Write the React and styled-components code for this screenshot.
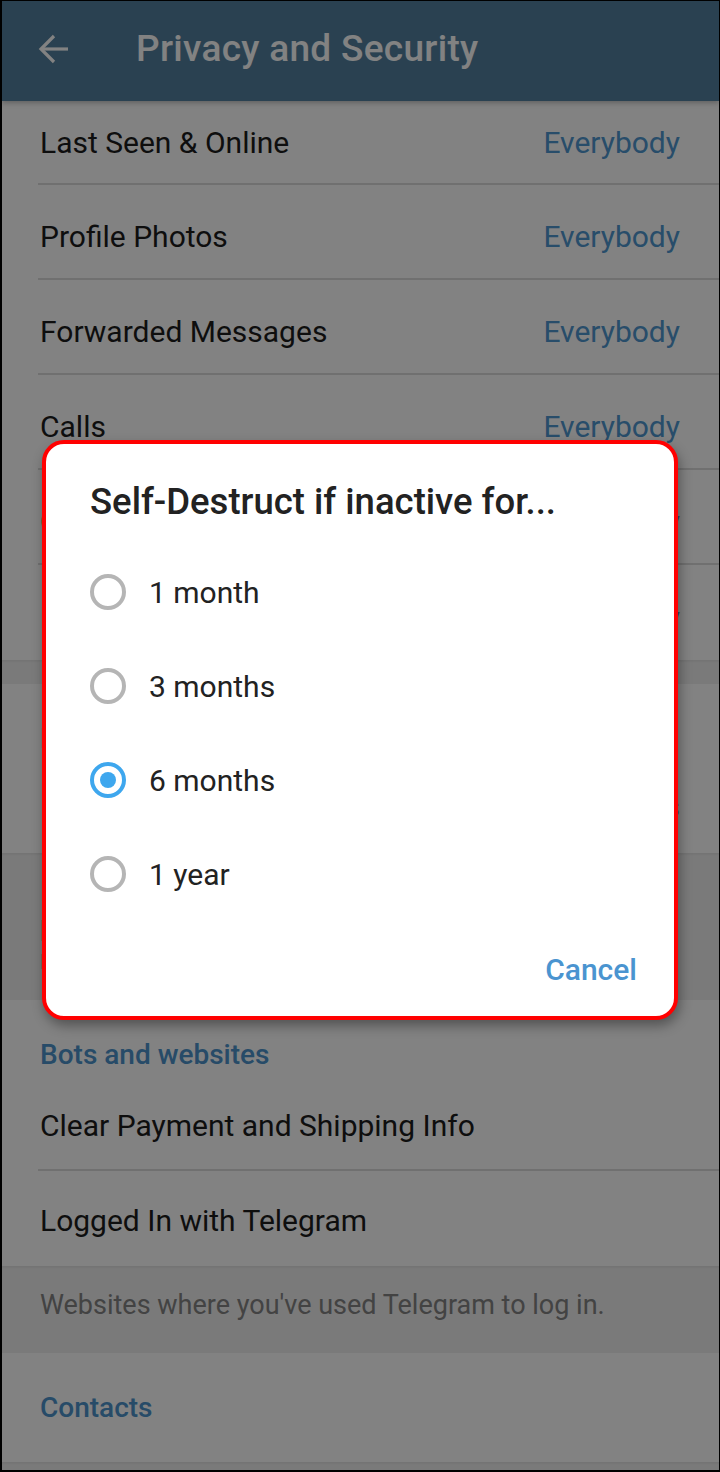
import React from 'react';
import styled, { createGlobalStyle } from 'styled-components';

const GlobalStyle = createGlobalStyle`
  html, body {
    margin: 0;
    padding: 0;
    background: #000;
  }
  body {
    font-family: Roboto, "Noto Sans", "Liberation Sans", sans-serif;
  }
`;

const Screen = styled.div`
  position: relative;
  width: 720px;
  height: 1472px;
  box-sizing: border-box;
  border-style: solid;
  border-color: #000;
  border-width: 1px 1px 2px 2px;
  background: #efeff3;
  overflow: hidden;
  display: flex;
  flex-direction: column;
`;

const Header = styled.header`
  height: 100px;
  flex-shrink: 0;
  background: #54809f;
  display: flex;
  align-items: center;
  padding-left: 36px;
  gap: 66px;
  box-shadow: 0 2px 5px rgba(0, 0, 0, 0.25);
  position: relative;
  z-index: 1;
`;

const BackIcon = styled.svg`
  width: 32px;
  height: 32px;
  margin-top: -4px;
`;

const Title = styled.h1`
  margin: 0;
  margin-top: -6px;
  font-size: 37px;
  font-weight: 500;
  color: #fff;
  letter-spacing: 0.3px;
`;

const Section = styled.section`
  background: #fff;
  display: flex;
  flex-direction: column;
`;

const SectionTitle = styled.div`
  height: ${(p) => p.$h}px;
  box-sizing: border-box;
  padding: 38px 38px 0;
  font-size: 28px;
  font-weight: 500;
  color: #4d94cc;
`;

const Row = styled.div`
  height: ${(p) => p.$h ?? 95}px;
  flex-shrink: 0;
  box-sizing: border-box;
  margin-left: 36px;
  padding: ${(p) => p.$top ?? 2}px 39px 0 2px;
  display: flex;
  align-items: center;
  justify-content: space-between;
  border-bottom: ${(p) => (p.$last ? 'none' : '2px solid #dcdcdc')};
  font-size: 30px;
  color: #1c1c1c;
`;

const Value = styled.span`
  color: #4f97d0;
`;

const Info = styled.div`
  height: ${(p) => p.$h}px;
  flex-shrink: 0;
  box-sizing: border-box;
  background: #f0f0f0;
  padding: ${(p) => p.$pad || '22px 38px 0'};
  font-size: 27px;
  line-height: 34px;
  color: #838383;
  box-shadow: inset 0 2px 2px rgba(0, 0, 0, 0.05);
  overflow: hidden;
`;

const Dim = styled.div`
  position: absolute;
  inset: 0;
  background: rgba(0, 0, 0, 0.49);
  display: flex;
  justify-content: center;
  align-items: flex-start;
  padding-top: 439px;
  z-index: 5;
`;

const Dialog = styled.div`
  width: 636px;
  box-sizing: border-box;
  margin-left: -1px;
  background: #fff;
  border: 4px solid #ff0000;
  border-radius: 22px;
  padding: 34px 0 19px;
  box-shadow: 2px 6px 12px rgba(0, 0, 0, 0.35);
  display: flex;
  flex-direction: column;
`;

const DialogTitle = styled.div`
  padding: 0 44px;
  font-size: 36.5px;
  font-weight: 500;
  color: #222;
  line-height: 48px;
  margin-bottom: 19px;
`;

const Option = styled.label`
  height: 94px;
  display: flex;
  align-items: center;
  gap: 23px;
  padding-left: 44px;
  font-size: 30px;
  color: #222;
`;

const Radio = styled.span`
  width: 36px;
  height: 36px;
  box-sizing: border-box;
  border-radius: 50%;
  border: 4px solid ${(p) => (p.$on ? '#3ea7ee' : '#b5b5b5')};
  display: flex;
  align-items: center;
  justify-content: center;
  &::after {
    content: '';
    width: 16px;
    height: 16px;
    border-radius: 50%;
    background: #3ea7ee;
    display: ${(p) => (p.$on ? 'block' : 'none')};
  }
`;

const Actions = styled.div`
  display: flex;
  justify-content: flex-end;
  padding: 0 37px;
  margin-top: 20px;
`;

const TextButton = styled.button`
  border: none;
  background: none;
  height: 56px;
  padding: 0;
  font-family: inherit;
  font-size: 30px;
  font-weight: 500;
  color: #4a94d0;
`;

const privacyRows = [
  ['Last Seen & Online', 'Everybody'],
  ['Profile Photos', 'Everybody'],
  ['Forwarded Messages', 'Everybody'],
  ['Calls', 'Everybody'],
  ['Groups & Channels', 'Everybody'],
  ['Phone Number', 'Everybody'],
];

const options = ['1 month', '3 months', '6 months', '1 year'];

export default function App() {
  return (
    <>
      <GlobalStyle />
      <Screen>
        <Header>
          <BackIcon viewBox="0 0 32 32" fill="none" stroke="#fff" strokeWidth="3.2">
            <path d="M30 16H3" />
            <path d="M16 3L3 16l13 13" />
          </BackIcon>
          <Title>Privacy and Security</Title>
        </Header>

        <Section>
          {privacyRows.map(([label, value], i) => (
            <Row
              key={label}
              $h={i === 0 ? 84 : 95}
              $top={i === 0 ? 0 : 9}
              $last={i === privacyRows.length - 1}
            >
              <span>{label}</span>
              <Value>{value}</Value>
            </Row>
          ))}
        </Section>
        <Info $h={24} />

        <Section>
          <SectionTitle $h={74}>Delete my account</SectionTitle>
          <Row $last>
            <span>If away for</span>
            <Value>6 months</Value>
          </Row>
        </Section>
        <Info $h={147}>
          If you do not come online at least once within this period, your account will be
          deleted along with all messages and contacts.
        </Info>

        <Section>
          <SectionTitle $h={78}>Bots and websites</SectionTitle>
          <Row $h={93} $top={4}>
            <span>Clear Payment and Shipping Info</span>
          </Row>
          <Row $last $top={4}>
            <span>Logged In with Telegram</span>
          </Row>
        </Section>
        <Info $h={87} $pad="22px 38px 0">
          Websites where you've used Telegram to log in.
        </Info>

        <Section>
          <SectionTitle $h={109}>Contacts</SectionTitle>
        </Section>
        <Info $h={40} />

        <Dim>
          <Dialog>
            <DialogTitle>Self-Destruct if inactive for...</DialogTitle>
            {options.map((o) => (
              <Option key={o}>
                <Radio $on={o === '6 months'} />
                {o}
              </Option>
            ))}
            <Actions>
              <TextButton>Cancel</TextButton>
            </Actions>
          </Dialog>
        </Dim>
      </Screen>
    </>
  );
}
